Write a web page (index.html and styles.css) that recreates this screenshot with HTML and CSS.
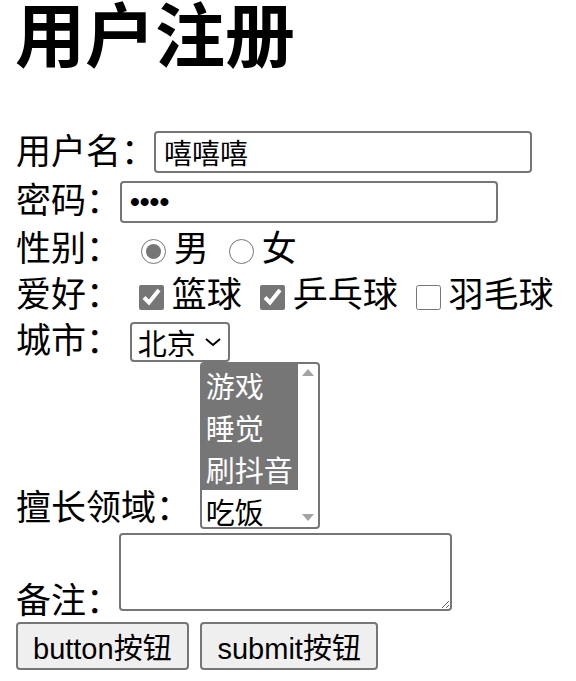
FILE: index.html
```html
<!DOCTYPE html>
<html lang="zh-CN">
<head>
    <meta charset="UTF-8">
    <title>用户注册</title>
    <link rel="stylesheet" href="styles.css">
</head>
<body>
    <h1>用户注册</h1>
    <form class="reg-form" action="#">
        用户名：<input class="field name" type="text" name="username" value="嘻嘻嘻"><br>
        密码：<input class="field pwd" type="password" name="pwd" value="1234"><br>
        性别：
        <input class="radio" type="radio" name="sex" checked>男
        <input class="radio" type="radio" name="sex">女<br>
        爱好：
        <input class="check" type="checkbox" name="hobby" checked>篮球
        <input class="check" type="checkbox" name="hobby" checked>乒乓球
        <input class="check" type="checkbox" name="hobby">羽毛球<br>
        城市：
        <select class="city" name="city">
            <option selected>北京</option>
            <option>上海</option>
            <option>广州</option>
        </select><br>
        擅长领域：
        <select class="skills" name="skill" multiple size="4">
            <option selected>游戏</option>
            <option selected>睡觉</option>
            <option selected>刷抖音</option>
            <option>吃饭</option>
        </select><br>
        备注：<textarea class="note" name="note"></textarea><br>
        <input class="btn" type="button" value="button按钮">
        <input class="btn" type="submit" value="submit按钮">
    </form>
</body>
</html>
```

FILE: styles.css
```css
body {
    margin: 0;
    padding: 0 16px 16px;
    font-family: "Noto Sans CJK SC", "Liberation Sans", sans-serif;
    font-size: 35px;
    color: #000;
    background: #fff;
}
h1 {
    margin: 0 0 62px -1px;
    font-size: 70px;
    line-height: 64px;
    font-weight: bold;
}
.reg-form {
    line-height: 46px;
}
/* text inputs */
.field {
    box-sizing: border-box;
    width: 378px;
    height: 42px;
    margin: 0 0 0 -1px;
    padding: 0 8px;
    border: 2px solid #767676;
    border-radius: 4px;
    font: 28px "Noto Sans CJK SC", "Liberation Sans", sans-serif;
    vertical-align: 0;
}
.name {
    margin: 0 0 2px -2px;
}
.pwd {
    font-family: "Liberation Sans", sans-serif;
    font-weight: bold;
    vertical-align: 2px;
}
.radio, .check {
    width: 25px;
    height: 25px;
    margin: 0 8px 0 10px;
    accent-color: #767676;
    vertical-align: -3px;
}
.radio {
    margin: 0 8px 0 12px;
}
.city {
    box-sizing: border-box;
    width: 100px;
    height: 40px;
    margin: 0 0 0 1px;
    padding: 0 0 0 6px;
    border: 2px solid #767676;
    border-radius: 4px;
    appearance: none;
    background: #fff url("data:image/svg+xml,%3Csvg xmlns='http://www.w3.org/2000/svg' width='20' height='12' viewBox='0 0 20 12'%3E%3Cpath d='M3 3l7 6 7-6' fill='none' stroke='%23000' stroke-width='2'/%3E%3C/svg%3E") no-repeat right 5px center;
    font: 29px "Noto Sans CJK SC", sans-serif;
    line-height: 36px;
    vertical-align: -2px;
}
/* multi-select with a drawn scrollbar strip */
.skills {
    box-sizing: border-box;
    width: 120px;
    height: 167px;
    margin: 0 0 0 1px;
    padding: 0 20px 0 0;
    border: 2px solid #767676;
    border-radius: 4px;
    background: #fff url("data:image/svg+xml,%3Csvg xmlns='http://www.w3.org/2000/svg' width='20' height='163'%3E%3Cpath d='M4 12L10 5l6 7z M4 150h12l-6 7z' fill='%23a3a3a3'/%3E%3C/svg%3E") no-repeat right 0 top 0;
    font: 29px "Noto Sans CJK SC", sans-serif;
    vertical-align: -9px;
}
.skills option {
    padding: 0 4px;
    line-height: 41px;
}
.skills option:checked {
    background: #767676 linear-gradient(#767676, #767676);
    color: #fff;
}
.note {
    box-sizing: border-box;
    width: 333px;
    height: 78px;
    margin: 4px 0 0 -2px;
    border: 2px solid #767676;
    border-radius: 4px;
    vertical-align: 2px;
    resize: both;
}
.btn {
    box-sizing: border-box;
    height: 48px;
    margin: 0 4px 0 0;
    padding: 0 15px;
    border: 2px solid #767676;
    border-radius: 4px;
    background: #efefef;
    font: 29px "Liberation Sans", "Noto Sans CJK SC", sans-serif;
    color: #000;
}
```
